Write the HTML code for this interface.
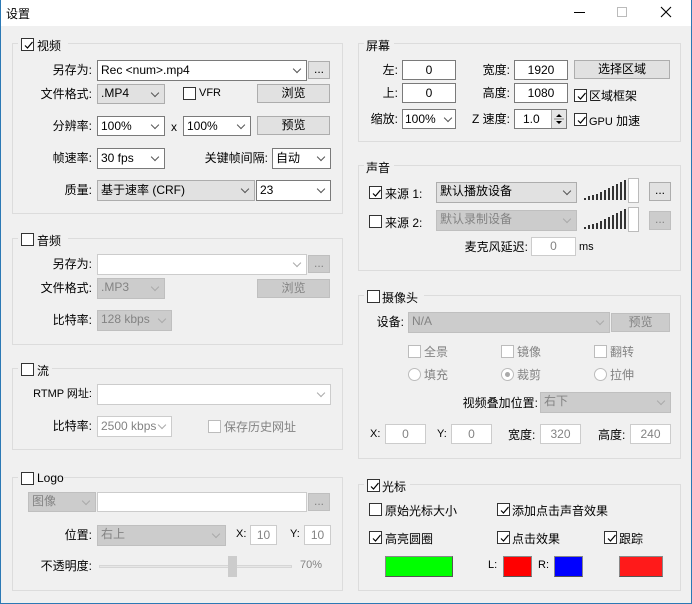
<!DOCTYPE html>
<html><head><meta charset="utf-8"><style>
*{box-sizing:border-box;margin:0;padding:0}
body{width:692px;height:604px;overflow:hidden;background:#f0f0f0;font-family:"Liberation Sans","Noto Sans CJK SC",sans-serif;font-size:12px;color:#000;position:relative}
.a{position:absolute;white-space:nowrap}
#win{position:absolute;left:0;top:0;width:692px;height:604px;border:1px solid #2b79b5;border-top:none}
#tb{position:absolute;left:0;top:0;width:692px;height:26px;background:#fff}
.g{position:absolute;border:1px solid #dcdcdc}
.gt{position:absolute;background:#f0f0f0;padding:0 2px;line-height:14px;font-size:12px}
.r{text-align:right;line-height:20px}
.in{position:absolute;background:#fff;border:1px solid #7a7a7a;line-height:18px;padding-left:3px}
.dis{border-color:#cccccc;color:#838383}
.cb{position:absolute;background:#e1e1e1;border:1px solid #adadad;line-height:16px;padding-left:3px}
.cbd{background:#cccccc;border-color:#bfbfbf;color:#838383}
.btn{position:absolute;background:#e1e1e1;border:1px solid #adadad;text-align:center;line-height:16px}
.bd{background:#cccccc;border-color:#bfbfbf;color:#838383}
.ch{position:absolute;right:6px;top:5px;width:6px;height:6px;border-right:1px solid #555;border-bottom:1px solid #555;transform:rotate(45deg)}
.chd{border-color:#aaa}
.ck{position:absolute;width:13px;height:13px;border:1px solid #333;background:#fff}
.ckd{border-color:#bcbcbc}
.ck svg{position:absolute;left:1px;top:1px}
.rd{position:absolute;width:13px;height:13px;border:1px solid #bcbcbc;border-radius:50%;background:#fff}
.c{text-align:center}
.gray{color:#838383}
</style></head><body>
<div id="tb"></div>
<div class="a" style="left:6px;top:5px;font-size:12px">设置</div>
<div class="a" style="left:574px;top:12px;width:11px;height:1px;background:#000"></div>
<div class="a" style="left:617px;top:7px;width:10px;height:10px;border:1px solid #bbb"></div>
<svg class="a" style="left:660px;top:6px" width="12" height="12"><path d="M1 1L11 11M11 1L1 11" stroke="#000" stroke-width="1.1"/></svg>
<div id="win"></div>

<!-- VIDEO -->
<div class="g" style="left:12px;top:43px;width:331px;height:171px"></div>
<div class="gt" style="left:18px;top:37px;width:50px;height:14px"></div>
<div class="ck" style="left:21px;top:38px"><svg width="11" height="11"><path d="M2 5.5L4.5 8L9.5 2" stroke="#000" fill="none" stroke-width="1.2"/></svg></div>
<div class="a" style="left:37px;top:37px">视频</div>
<div class="a r" style="left:30px;top:60px;width:62px">另存为:</div>
<div class="in" style="left:97px;top:60px;width:210px;height:21px">Rec &lt;num&gt;.mp4<span class="ch"></span></div>
<div class="btn" style="left:308px;top:61px;width:22px;height:18px;line-height:14px">...</div>
<div class="a r" style="left:30px;top:84px;width:62px">文件格式:</div>
<div class="cb" style="left:97px;top:84px;width:68px;height:20px">.MP4<span class="ch"></span></div>
<div class="ck" style="left:183px;top:87px"></div>
<div class="a" style="left:199px;top:87px;font-size:11px">VFR</div>
<div class="btn" style="left:257px;top:84px;width:73px;height:19px">浏览</div>
<div class="a r" style="left:30px;top:116px;width:62px">分辨率:</div>
<div class="in" style="left:97px;top:116px;width:68px;height:20px">100%<span class="ch"></span></div>
<div class="a" style="left:171px;top:120px">x</div>
<div class="in" style="left:183px;top:116px;width:68px;height:20px">100%<span class="ch"></span></div>
<div class="btn" style="left:257px;top:116px;width:73px;height:19px">预览</div>
<div class="a r" style="left:30px;top:148px;width:62px">帧速率:</div>
<div class="in" style="left:97px;top:148px;width:68px;height:21px">30 fps<span class="ch"></span></div>
<div class="a r" style="left:190px;top:148px;width:78px">关键帧间隔:</div>
<div class="in" style="left:272px;top:148px;width:59px;height:21px">自动<span class="ch"></span></div>
<div class="a r" style="left:30px;top:180px;width:62px">质量:</div>
<div class="cb" style="left:97px;top:180px;width:158px;height:21px;line-height:18px">基于速率 (CRF)<span class="ch"></span></div>
<div class="in" style="left:256px;top:180px;width:75px;height:21px">23<span class="ch"></span></div>

<!-- AUDIO -->
<div class="g" style="left:12px;top:238px;width:331px;height:107px"></div>
<div class="gt" style="left:18px;top:232px;width:50px;height:14px"></div>
<div class="ck" style="left:21px;top:233px"></div>
<div class="a" style="left:37px;top:232px">音频</div>
<div class="a r" style="left:30px;top:254px;width:62px">另存为:</div>
<div class="in dis" style="left:97px;top:254px;width:210px;height:21px"><span class="ch chd"></span></div>
<div class="btn bd" style="left:308px;top:255px;width:22px;height:18px;line-height:14px">...</div>
<div class="a r" style="left:30px;top:278px;width:62px">文件格式:</div>
<div class="cb cbd" style="left:97px;top:278px;width:68px;height:21px">.MP3<span class="ch chd"></span></div>
<div class="btn bd" style="left:257px;top:279px;width:73px;height:19px">浏览</div>
<div class="a r" style="left:30px;top:310px;width:62px">比特率:</div>
<div class="cb cbd" style="left:97px;top:310px;width:75px;height:21px">128 kbps<span class="ch chd"></span></div>

<!-- STREAM -->
<div class="g" style="left:12px;top:368px;width:331px;height:82px"></div>
<div class="gt" style="left:18px;top:362px;width:34px;height:14px"></div>
<div class="ck" style="left:21px;top:363px"></div>
<div class="a" style="left:37px;top:362px">流</div>
<div class="a r" style="left:20px;top:384px;width:72px;font-size:11px">RTMP 网址:</div>
<div class="in dis" style="left:97px;top:384px;width:234px;height:21px"><span class="ch chd"></span></div>
<div class="a r" style="left:30px;top:416px;width:62px">比特率:</div>
<div class="in dis" style="left:97px;top:416px;width:75px;height:21px">2500 kbps<span class="ch chd"></span></div>
<div class="ck ckd" style="left:208px;top:420px"></div>
<div class="a gray" style="left:224px;top:418px">保存历史网址</div>

<!-- LOGO -->
<div class="g" style="left:12px;top:477px;width:331px;height:114px"></div>
<div class="gt" style="left:18px;top:471px;width:46px;height:14px"></div>
<div class="ck" style="left:21px;top:472px"></div>
<div class="a" style="left:37px;top:471px">Logo</div>
<div class="cb cbd" style="left:28px;top:492px;width:68px;height:20px">图像<span class="ch chd"></span></div>
<div class="in dis" style="left:97px;top:492px;width:210px;height:20px"></div>
<div class="btn bd" style="left:308px;top:493px;width:22px;height:18px;line-height:14px">...</div>
<div class="a r" style="left:30px;top:525px;width:62px">位置:</div>
<div class="cb cbd" style="left:97px;top:525px;width:129px;height:21px">右上<span class="ch chd"></span></div>
<div class="a" style="left:236px;top:528px;font-size:11px">X:</div>
<div class="in dis" style="left:250px;top:525px;width:27px;height:20px;text-align:center;padding:0">10</div>
<div class="a" style="left:290px;top:528px;font-size:11px">Y:</div>
<div class="in dis" style="left:304px;top:525px;width:27px;height:20px;text-align:center;padding:0">10</div>
<div class="a r" style="left:20px;top:556px;width:72px">不透明度:</div>
<div class="a" style="left:99px;top:565px;width:193px;height:3px;background:#e7e7e7;border:1px solid #d6d6d6"></div>
<div class="a" style="left:228px;top:556px;width:9px;height:21px;background:#cccccc"></div>
<div class="a gray" style="left:300px;top:559px;font-size:11px">70%</div>

<!-- SCREEN -->
<div class="g" style="left:358px;top:43px;width:323px;height:99px"></div>
<div class="gt" style="left:364px;top:37px;width:30px;height:14px"></div>
<div class="a" style="left:366px;top:37px">屏幕</div>
<div class="a r" style="left:360px;top:60px;width:38px">左:</div>
<div class="in c" style="left:402px;top:60px;width:54px;height:20px;padding:0">0</div>
<div class="a r" style="left:470px;top:60px;width:40px">宽度:</div>
<div class="in c" style="left:514px;top:60px;width:54px;height:20px;padding:0">1920</div>
<div class="btn" style="left:574px;top:60px;width:96px;height:19px">选择区域</div>
<div class="a r" style="left:360px;top:83px;width:38px">上:</div>
<div class="in c" style="left:402px;top:83px;width:54px;height:20px;padding:0">0</div>
<div class="a r" style="left:470px;top:83px;width:40px">高度:</div>
<div class="in c" style="left:514px;top:83px;width:54px;height:20px;padding:0">1080</div>
<div class="ck" style="left:574px;top:89px"><svg width="11" height="11"><path d="M2 5.5L4.5 8L9.5 2" stroke="#000" fill="none" stroke-width="1.2"/></svg></div>
<div class="a" style="left:589px;top:87px">区域框架</div>
<div class="a r" style="left:360px;top:109px;width:38px">缩放:</div>
<div class="in" style="left:402px;top:109px;width:54px;height:20px;padding-left:2px">100%<span class="ch" style="right:4px"></span></div>
<div class="a r" style="left:460px;top:109px;width:50px">Z 速度:</div>
<div class="in" style="left:514px;top:109px;width:53px;height:20px;padding-left:8px">1.0</div>
<div class="a" style="left:551px;top:110px;width:15px;height:18px;background:#e5e5e5;border-left:1px solid #aaa"></div>
<svg class="a" style="left:553px;top:111px" width="12" height="16"><path d="M3 6L6 3L9 6Z M3 10L6 13L9 10Z" fill="#000"/><path d="M1 8H11" stroke="#888"/></svg>
<div class="ck" style="left:574px;top:113px"><svg width="11" height="11"><path d="M2 5.5L4.5 8L9.5 2" stroke="#000" fill="none" stroke-width="1.2"/></svg></div>
<div class="a" style="left:589px;top:112px"><span style="font-size:11px">GPU</span> 加速</div>

<!-- SOUND -->
<div class="g" style="left:358px;top:165px;width:323px;height:106px"></div>
<div class="gt" style="left:364px;top:159px;width:30px;height:14px"></div>
<div class="a" style="left:366px;top:159px">声音</div>
<div class="ck" style="left:369px;top:186px"><svg width="11" height="11"><path d="M2 5.5L4.5 8L9.5 2" stroke="#000" fill="none" stroke-width="1.2"/></svg></div>
<div class="a" style="left:385px;top:185px">来源 1:</div>
<div class="cb" style="left:436px;top:182px;width:141px;height:21px">默认播放设备<span class="ch"></span></div>
<svg class="a" style="left:584px;top:178px" width="58" height="26"><g fill="#333"><rect x="0" y="20" width="2" height="2"/><rect x="4" y="18" width="2" height="4"/><rect x="8" y="17" width="2" height="5"/><rect x="12" y="16" width="2" height="6"/><rect x="16" y="14" width="2" height="8"/><rect x="20" y="12" width="2" height="10"/><rect x="24" y="10" width="2" height="12"/><rect x="28" y="8" width="2" height="14"/><rect x="32" y="6" width="2" height="16"/><rect x="36" y="4" width="2" height="18"/><rect x="40" y="2" width="2" height="20"/></g><rect x="44.5" y="0.5" width="10" height="24" fill="#fff" stroke="#bbb"/></svg>
<div class="btn" style="left:649px;top:182px;width:22px;height:19px;line-height:14px">...</div>
<div class="ck" style="left:369px;top:215px"></div>
<div class="a" style="left:385px;top:214px">来源 2:</div>
<div class="cb cbd" style="left:436px;top:210px;width:141px;height:21px">默认录制设备<span class="ch chd"></span></div>
<svg class="a" style="left:584px;top:207px" width="58" height="26"><g fill="#333"><rect x="0" y="20" width="2" height="2"/><rect x="4" y="18" width="2" height="4"/><rect x="8" y="17" width="2" height="5"/><rect x="12" y="16" width="2" height="6"/><rect x="16" y="14" width="2" height="8"/><rect x="20" y="12" width="2" height="10"/><rect x="24" y="10" width="2" height="12"/><rect x="28" y="8" width="2" height="14"/><rect x="32" y="6" width="2" height="16"/><rect x="36" y="4" width="2" height="18"/><rect x="40" y="2" width="2" height="20"/></g><rect x="44.5" y="0.5" width="10" height="24" fill="#fff" stroke="#bbb"/></svg>
<div class="btn bd" style="left:649px;top:211px;width:22px;height:19px;line-height:14px">...</div>
<div class="a r" style="left:450px;top:237px;width:78px">麦克风延迟:</div>
<div class="in dis c" style="left:531px;top:237px;width:45px;height:19px;padding:0;line-height:17px">0</div>
<div class="a" style="left:579px;top:241px;font-size:11px">ms</div>

<!-- CAMERA -->
<div class="g" style="left:358px;top:295px;width:323px;height:164px"></div>
<div class="gt" style="left:364px;top:289px;width:60px;height:14px"></div>
<div class="ck" style="left:367px;top:290px"></div>
<div class="a" style="left:382px;top:289px">摄像头</div>
<div class="a r" style="left:360px;top:312px;width:44px">设备:</div>
<div class="cb cbd" style="left:408px;top:312px;width:202px;height:21px">N/A<span class="ch chd"></span></div>
<div class="btn bd" style="left:611px;top:313px;width:59px;height:19px">预览</div>
<div class="ck ckd" style="left:408px;top:345px"></div><div class="a gray" style="left:424px;top:343px">全景</div>
<div class="ck ckd" style="left:501px;top:345px"></div><div class="a gray" style="left:517px;top:343px">镜像</div>
<div class="ck ckd" style="left:594px;top:345px"></div><div class="a gray" style="left:610px;top:343px">翻转</div>
<div class="rd" style="left:408px;top:368px"></div><div class="a gray" style="left:424px;top:366px">填充</div>
<div class="rd" style="left:501px;top:368px"><div style="position:absolute;left:3px;top:3px;width:5px;height:5px;border-radius:50%;background:#aaa"></div></div><div class="a gray" style="left:517px;top:366px">裁剪</div>
<div class="rd" style="left:594px;top:368px"></div><div class="a gray" style="left:610px;top:366px">拉伸</div>
<div class="a r" style="left:440px;top:393px;width:98px">视频叠加位置:</div>
<div class="cb cbd" style="left:540px;top:392px;width:131px;height:21px">右下<span class="ch chd"></span></div>
<div class="a" style="left:370px;top:428px;font-size:11px">X:</div>
<div class="in dis c" style="left:385px;top:424px;width:41px;height:20px;padding:0">0</div>
<div class="a" style="left:437px;top:428px;font-size:11px">Y:</div>
<div class="in dis c" style="left:451px;top:424px;width:41px;height:20px;padding:0">0</div>
<div class="a" style="left:508px;top:426px">宽度:</div>
<div class="in dis c" style="left:540px;top:424px;width:41px;height:20px;padding:0">320</div>
<div class="a" style="left:598px;top:426px">高度:</div>
<div class="in dis c" style="left:630px;top:424px;width:41px;height:20px;padding:0">240</div>

<!-- CURSOR -->
<div class="g" style="left:358px;top:484px;width:323px;height:107px"></div>
<div class="gt" style="left:364px;top:478px;width:46px;height:14px"></div>
<div class="ck" style="left:367px;top:479px"><svg width="11" height="11"><path d="M2 5.5L4.5 8L9.5 2" stroke="#000" fill="none" stroke-width="1.2"/></svg></div>
<div class="a" style="left:382px;top:478px">光标</div>
<div class="ck" style="left:369px;top:503px"></div><div class="a" style="left:385px;top:502px">原始光标大小</div>
<div class="ck" style="left:497px;top:503px"><svg width="11" height="11"><path d="M2 5.5L4.5 8L9.5 2" stroke="#000" fill="none" stroke-width="1.2"/></svg></div><div class="a" style="left:512px;top:502px">添加点击声音效果</div>
<div class="ck" style="left:369px;top:531px"><svg width="11" height="11"><path d="M2 5.5L4.5 8L9.5 2" stroke="#000" fill="none" stroke-width="1.2"/></svg></div><div class="a" style="left:385px;top:530px">高亮圆圈</div>
<div class="ck" style="left:497px;top:531px"><svg width="11" height="11"><path d="M2 5.5L4.5 8L9.5 2" stroke="#000" fill="none" stroke-width="1.2"/></svg></div><div class="a" style="left:512px;top:530px">点击效果</div>
<div class="ck" style="left:604px;top:531px"><svg width="11" height="11"><path d="M2 5.5L4.5 8L9.5 2" stroke="#000" fill="none" stroke-width="1.2"/></svg></div><div class="a" style="left:619px;top:530px">跟踪</div>
<div class="a" style="left:385px;top:556px;width:68px;height:21px;background:#00ff00;border:1px solid #888;border-right-color:#555;border-bottom-color:#555"></div>
<div class="a" style="left:488px;top:559px;font-size:11px">L:</div>
<div class="a" style="left:503px;top:556px;width:29px;height:21px;background:#ff0000;border:1px solid #888;border-bottom-color:#555"></div>
<div class="a" style="left:538px;top:559px;font-size:11px">R:</div>
<div class="a" style="left:554px;top:556px;width:29px;height:21px;background:#0000ff;border:1px solid #888;border-bottom-color:#555"></div>
<div class="a" style="left:619px;top:556px;width:44px;height:21px;background:#ff1a1a;border:1px solid #888;border-bottom-color:#555"></div>
</body></html>
